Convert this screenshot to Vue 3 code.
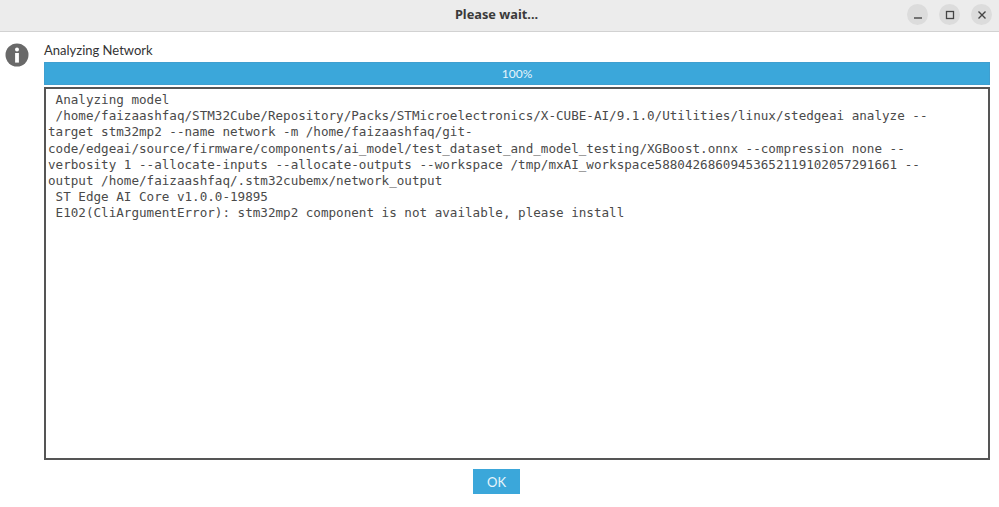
<script setup>
const logText = [
  ' Analyzing model',
  ' /home/faizaashfaq/STM32Cube/Repository/Packs/STMicroelectronics/X-CUBE-AI/9.1.0/Utilities/linux/stedgeai analyze --',
  'target stm32mp2 --name network -m /home/faizaashfaq/git-',
  'code/edgeai/source/firmware/components/ai_model/test_dataset_and_model_testing/XGBoost.onnx --compression none --',
  'verbosity 1 --allocate-inputs --allocate-outputs --workspace /tmp/mxAI_workspace58804268609453652119102057291661 --',
  'output /home/faizaashfaq/.stm32cubemx/network_output',
  ' ST Edge AI Core v1.0.0-19895',
  ' E102(CliArgumentError): stm32mp2 component is not available, please install',
].join('\n')
</script>

<template>
  <div class="window">
    <header class="titlebar">
      <span class="title">Please wait...</span>
      <div class="controls">
        <button class="ctl" aria-label="Minimize">
          <svg width="12" height="12" viewBox="0 0 12 12"><path d="M2 9h8" stroke="#444" stroke-width="1.4" fill="none" /></svg>
        </button>
        <button class="ctl" aria-label="Maximize">
          <svg width="12" height="12" viewBox="0 0 12 12"><rect x="2.5" y="2.5" width="7" height="7" stroke="#444" stroke-width="1.3" fill="none" /></svg>
        </button>
        <button class="ctl" aria-label="Close">
          <svg width="12" height="12" viewBox="0 0 12 12"><path d="M2.5 2.5l7 7M9.5 2.5l-7 7" stroke="#444" stroke-width="1.4" fill="none" /></svg>
        </button>
      </div>
    </header>
    <main class="body">
      <div class="row">
        <div class="icon-col">
          <svg width="24" height="24" viewBox="0 0 24 24">
            <circle cx="12" cy="12" r="11.5" fill="#696969" />
            <circle cx="12" cy="6.6" r="2" fill="#fff" />
            <rect x="10.1" y="10" width="3.8" height="9.6" fill="#fff" />
          </svg>
        </div>
        <div class="content">
          <div class="label">Analyzing Network</div>
          <div class="progress">100%</div>
          <pre class="log">{{ logText }}</pre>
        </div>
      </div>
      <div class="footer"><button class="ok">OK</button></div>
    </main>
  </div>
</template>

<style scoped>
.window {
  width: 999px;
  height: 507px;
  display: flex;
  flex-direction: column;
  background: #fff;
  overflow: hidden;
}
.titlebar {
  height: 31px;
  flex: none;
  display: flex;
  align-items: center;
  justify-content: center;
  position: relative;
  padding: 0 6px 3px 0;
  box-sizing: content-box;
  height: 28px;
  background: #ececec;
  border-bottom: 1px solid #d2d2d2;
}
.title {
  font: 700 12.8px "Noto Sans", sans-serif;
  color: #3a3a3a;
}
.controls {
  position: absolute;
  right: 7px;
  top: 4px;
  display: flex;
  gap: 11px;
}
.ctl {
  width: 21px;
  height: 21px;
  padding: 0;
  border: 0;
  border-radius: 50%;
  background: #dcdcdc;
  display: flex;
  align-items: center;
  justify-content: center;
}
.body {
  flex: 1;
  display: flex;
  flex-direction: column;
  padding-top: 11px;
}
.row {
  display: flex;
  padding: 0 9px 0 5px;
}
.icon-col {
  width: 39px;
  flex: none;
}
.content {
  flex: 1;
  display: flex;
  flex-direction: column;
  min-width: 0;
}
.label {
  height: 19px;
  font: 400 13px/15px "Lato", sans-serif;
  color: #333;
}
.progress {
  height: 23px;
  background: #3ba7da;
  border: 1px solid #3f9fd0;
  box-sizing: border-box;
  color: #e8f5fb;
  font: 400 12px/21px "Lato", sans-serif;
  text-align: center;
}
.log {
  height: 373px;
  margin: 2px 0 0;
  box-sizing: border-box;
  border: 2px solid #555;
  padding: 3px 2px;
  font: 400 12.6px/16.2px "DejaVu Sans Mono", monospace;
  color: #4a4a4a;
  white-space: pre;
  overflow: hidden;
}
.footer {
  display: flex;
  justify-content: center;
  padding: 9px 6px 0 0;
}
.ok {
  width: 47px;
  height: 25px;
  padding: 0;
  border: 0;
  background: #3ba7da;
  color: #e8f5fb;
  font: 400 13px "Lato", sans-serif;
}
</style>
